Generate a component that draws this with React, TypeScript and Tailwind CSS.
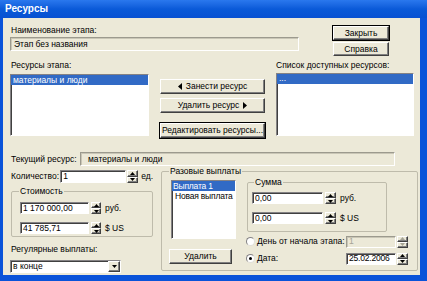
import type { ReactNode } from 'react';

const sunkenWhite =
  'bg-white border border-t-[#848284] border-l-[#848284] border-b-white border-r-white shadow-[inset_1px_1px_0_#404040]';
const sunkenGray =
  'bg-[#ece9d8] border border-t-[#9c9a8e] border-l-[#9c9a8e] border-b-white border-r-white shadow-[inset_1px_1px_0_#c9c6b6]';
const raised =
  'bg-[#ece9d8] border border-t-white border-l-white border-b-[#404040] border-r-[#404040] shadow-[inset_-1px_-1px_0_#808080]';
const group = 'border border-[#bebbab] rounded-[2px]';

function Tri({ down, muted }: { down?: boolean; muted?: boolean }) {
  return (
    <svg width="5" height="3" viewBox="0 0 5 3">
      <polygon
        points={down ? '0,0 5,0 2.5,3' : '0,3 5,3 2.5,0'}
        fill={muted ? '#a6a496' : '#000'}
      />
    </svg>
  );
}

function Spin({ w = 'w-[11px]', h = 'h-[13px]', muted }: { w?: string; h?: string; muted?: boolean }) {
  return (
    <div className={`flex flex-col shrink-0 ${w} ${h}`}>
      <div className={`flex-1 flex items-center justify-center ${raised}`}>
        <Tri muted={muted} />
      </div>
      <div className={`flex-1 flex items-center justify-center ${raised}`}>
        <Tri down muted={muted} />
      </div>
    </div>
  );
}

function Btn({ children, className = '', def }: { children: ReactNode; className?: string; def?: boolean }) {
  return (
    <div
      className={`flex items-center justify-center shrink-0 whitespace-nowrap ${raised} ${def ? 'ring-1 ring-black' : ''} ${className}`}
    >
      {children}
    </div>
  );
}

function Radio({ checked }: { checked?: boolean }) {
  return (
    <div className="w-[9px] h-[9px] rounded-full bg-white border border-t-[#848284] border-l-[#848284] border-b-[#e0dfd8] border-r-[#e0dfd8] flex items-center justify-center shrink-0">
      {checked && <div className="w-[3px] h-[3px] rounded-full bg-black" />}
    </div>
  );
}

export default function App() {
  return (
    <div className="w-[427px] h-[281px] flex flex-col overflow-hidden whitespace-nowrap bg-[#0a53d9] font-['Liberation_Sans',Arial,sans-serif] text-[8.5px] text-black">
      {/* Title bar */}
      <div className="h-[18px] shrink-0 flex items-center pl-[5px] bg-gradient-to-b from-[#2a78ee] via-[#0a5ad8] to-[#0851d2]">
        <span className="text-white font-bold text-[10px] leading-none">Ресурсы</span>
      </div>

      {/* Body */}
      <div className="flex-1 ml-[3px] mr-[7px] mb-[6px] bg-[#ece9d8] pl-[7px] pt-[6px] flex flex-col">
        {/* Stage name + buttons */}
        <div className="flex items-start">
          <div className="w-[289px] flex flex-col">
            <div className="h-[13px] leading-[13px] pl-[1px]">Наименование этапа:</div>
            <div className={`h-[14px] flex items-center pl-[3px] ${sunkenGray}`}>Этап без названия</div>
          </div>
          <div className="ml-[34px] pt-[2px] flex flex-col gap-[2px]">
            <Btn def className="w-[56px] h-[14px]">Закрыть</Btn>
            <Btn className="w-[56px] h-[14px]">Справка</Btn>
          </div>
        </div>

        {/* Resource lists */}
        <div className="mt-[3px] flex items-start">
          <div className="w-[139px] flex flex-col">
            <div className="h-[12px] leading-[12px] pl-[1px]">Ресурсы этапа:</div>
            <div className={`mt-[3px] h-[62px] ${sunkenWhite}`}>
              <div className="h-[10px] leading-[10px] pl-[2px] bg-[#316ac5] text-white">материалы и люди</div>
            </div>
          </div>
          <div className="ml-[11px] w-[105px] pt-[20px] flex flex-col">
            <Btn className="h-[15px] gap-[4px]">
              <svg width="4" height="7" viewBox="0 0 4 7">
                <polygon points="4,0 4,7 0,3.5" fill="#000" />
              </svg>
              <span>Занести ресурс</span>
            </Btn>
            <Btn className="mt-[4px] h-[15px] gap-[4px]">
              <span>Удалить ресурс</span>
              <svg width="4" height="7" viewBox="0 0 4 7">
                <polygon points="0,0 0,7 4,3.5" fill="#000" />
              </svg>
            </Btn>
            <Btn def className="mt-[10px] h-[15px]">Редактировать ресурсы...</Btn>
          </div>
          <div className="ml-[11px] w-[138px] flex flex-col">
            <div className="h-[12px] leading-[12px]">Список доступных ресурсов:</div>
            <div className={`mt-[2px] h-[63px] ${sunkenWhite}`}>
              <div className="h-[10px] leading-[8px] pl-[2px] bg-[#316ac5] text-white">...</div>
            </div>
          </div>
        </div>

        {/* Current resource */}
        <div className="mt-[14px] flex items-center">
          <div className="w-[70px] pl-[1px]">Текущий ресурс:</div>
          <div className={`w-[315px] h-[14px] flex items-center pl-[7px] ${sunkenGray}`}>материалы и люди</div>
        </div>

        {/* Lower part */}
        <div className="flex items-start">
          <div className="w-[143px] pt-[4px] flex flex-col">
            <div className="h-[13px] flex items-center">
              <div className="w-[51px] pl-[1px]">Количество:</div>
              <div className={`w-[67px] h-[13px] flex items-center pl-[2px] ${sunkenWhite}`}>1</div>
              <div className="ml-[1px]">
                <Spin />
              </div>
              <span className="ml-[3px]">ед.</span>
            </div>

            <fieldset className={`ml-[1px] mt-[3px] w-[142px] px-[8px] pt-[5px] pb-[1px] ${group}`}>
              <legend className="-ml-[1px] px-[1px] leading-[11px]">Стоимость</legend>
              <div className="flex items-center">
                <div className={`w-[69px] h-[12px] flex items-center pl-[2px] ${sunkenWhite}`}>1 170 000,00</div>
                <div className="ml-[2px]">
                  <Spin w="w-[10px]" h="h-[12px]" />
                </div>
                <span className="ml-[4px]">руб.</span>
              </div>
              <div className="mt-[7px] flex items-center">
                <div className={`w-[69px] h-[12px] flex items-center pl-[2px] ${sunkenWhite}`}>41 785,71</div>
                <div className="ml-[2px]">
                  <Spin w="w-[10px]" h="h-[12px]" />
                </div>
                <span className="ml-[4px]">$ US</span>
              </div>
            </fieldset>

            <div className="mt-[6px] h-[12px] leading-[12px] pl-[1px]">Регулярные выплаты:</div>
            <div className={`mt-[5px] w-[111px] h-[13px] flex items-center pl-[2px] ${sunkenWhite}`}>
              <span className="flex-1">в конце</span>
              <div className={`w-[12px] h-[11px] flex items-center justify-center ${raised}`}>
                <Tri down />
              </div>
            </div>
          </div>

          <fieldset className={`ml-[8px] w-[257px] pl-[9px] pr-[9px] pb-[5px] ${group}`}>
            <legend className="-ml-[2px] px-[1px] leading-[11px]">Разовые выплаты</legend>
            <div className="flex items-start">
              <div className="pt-[3px] flex flex-col">
                <div className={`w-[65px] h-[59px] overflow-hidden tracking-[-0.2px] ${sunkenWhite}`}>
                  <div className="h-[10px] leading-[10px] pl-[1px] bg-[#316ac5] text-white">Выплата 1</div>
                  <div className="h-[10px] leading-[10px] pl-[3px]">Новая выплата</div>
                </div>
                <Btn className="-ml-[2px] mt-[10px] w-[63px] h-[15px]">Удалить</Btn>
              </div>

              <div className="ml-[11px] w-[161px] flex flex-col">
                <fieldset className={`w-[140px] pl-[4px] pt-[4px] pb-[6px] ${group}`}>
                  <legend className="ml-[2px] px-[1px] leading-[11px]">Сумма</legend>
                  <div className="flex items-center">
                    <div className={`w-[71px] h-[12px] flex items-center pl-[2px] ${sunkenWhite}`}>0,00</div>
                    <div className="ml-[2px]">
                      <Spin h="h-[12px]" />
                    </div>
                    <span className="ml-[4px]">руб.</span>
                  </div>
                  <div className="mt-[7px] flex items-center">
                    <div className={`w-[71px] h-[12px] flex items-center pl-[2px] ${sunkenWhite}`}>0,00</div>
                    <div className="ml-[2px]">
                      <Spin h="h-[12px]" />
                    </div>
                    <span className="ml-[4px]">$ US</span>
                  </div>
                </fieldset>

                <div className="mt-[4px] h-[12px] flex items-center">
                  <div className="-ml-[1px]">
                    <Radio />
                  </div>
                  <span className="ml-[2px]">День от начала этапа:</span>
                  <div className={`ml-auto w-[50px] h-[12px] flex items-center pl-[2px] text-[#a6a496] ${sunkenGray}`}>1</div>
                  <div className="ml-[1px]">
                    <Spin h="h-[12px]" muted />
                  </div>
                </div>
                <div className="mt-[5px] h-[12px] flex items-center">
                  <div className="-ml-[1px]">
                    <Radio checked />
                  </div>
                  <span className="ml-[2px]">Дата:</span>
                  <div className={`ml-auto w-[50px] h-[12px] flex items-center pl-[2px] overflow-hidden tracking-[-0.2px] ${sunkenWhite}`}>25.02.2006</div>
                  <div className="ml-[1px]">
                    <Spin h="h-[12px]" />
                  </div>
                </div>
              </div>
            </div>
          </fieldset>
        </div>
      </div>
    </div>
  );
}
